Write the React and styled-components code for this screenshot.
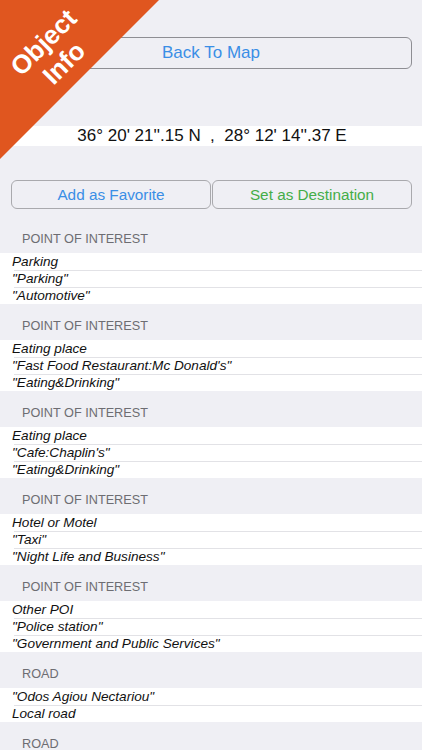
import React from "react";
import styled, { createGlobalStyle } from "styled-components";

const Global = createGlobalStyle`
  html, body { margin: 0; padding: 0; background: #efeff4; }
  body { font-family: "Liberation Sans", Arial, sans-serif; overflow: hidden; }
  * { box-sizing: border-box; }
`;

const Page = styled.div`
  position: relative;
  width: 422px;
  height: 750px;
  overflow: hidden;
  background: #efeff4;
  display: flex;
  flex-direction: column;
`;

const StatusBar = styled.div`
  height: 37px;
  flex: none;
`;

const TopBar = styled.div`
  display: flex;
  padding: 0 10px 0 10px;
`;

const OutlineButton = styled.button`
  flex: 1;
  height: ${(p) => p.$h}px;
  background: transparent;
  border: 1px solid ${(p) => p.$border || "#a9a9ad"};
  border-radius: 6px;
  color: ${(p) => p.$color};
  font-family: "Liberation Sans", Arial, sans-serif;
  font-size: ${(p) => p.$size}px;
  padding: 0;
  display: flex;
  align-items: center;
  justify-content: center;
  cursor: pointer;
`;

const CoordBar = styled.div`
  margin-top: 57px;
  height: 25px;
  background: #ffffff;
  display: flex;
  align-items: center;
  justify-content: center;
  font-size: 17px;
  color: #111;
  white-space: pre;
  padding-left: 2px;
`;

const ActionRow = styled.div`
  margin-top: 34px;
  display: flex;
  padding: 0 10px 0 11px;
  gap: 1px;
`;

const Sections = styled.div`
  margin-top: 8px;
  display: flex;
  flex-direction: column;
`;

const SectionHeader = styled.div`
  height: 36px;
  padding: 15px 0 0 22px;
  font-size: 12.7px;
  color: #6d6d72;
  text-transform: uppercase;
  line-height: 15px;
`;

const Group = styled.div`
  background: #ffffff;
  display: flex;
  flex-direction: column;
`;

const Row = styled.div`
  position: relative;
  height: 17px;
  line-height: 17px;
  padding-left: 12px;
  font-size: 13.6px;
  font-style: italic;
  color: #111;
  white-space: nowrap;
  & + & {
    &::before {
      content: "";
      position: absolute;
      left: 14px;
      right: 0;
      top: 0;
      height: 1px;
      background: #e2e2e6;
    }
  }
`;

const Corner = styled.div`
  position: absolute;
  left: 0;
  top: 0;
  width: 159px;
  height: 159px;
  background: #e0561f;
  clip-path: polygon(0 0, 100% 0, 0 100%);
  pointer-events: none;
`;

const CornerText = styled.div`
  position: absolute;
  left: 54px;
  top: 53px;
  transform: translate(-50%, -50%) rotate(-45deg);
  color: #ffffff;
  font-family: "Liberation Sans", Arial, sans-serif;
  font-weight: bold;
  font-size: 26px;
  line-height: 29px;
  text-align: center;
  white-space: nowrap;
`;

const sections = [
  { title: "Point of Interest", rows: ["Parking", '"Parking"', '"Automotive"'] },
  {
    title: "Point of Interest",
    rows: ["Eating place", '"Fast Food Restaurant:Mc Donald\'s"', '"Eating&Drinking"'],
  },
  { title: "Point of Interest", rows: ["Eating place", '"Cafe:Chaplin\'s"', '"Eating&Drinking"'] },
  {
    title: "Point of Interest",
    rows: ["Hotel or Motel", '"Taxi"', '"Night Life and Business"'],
  },
  {
    title: "Point of Interest",
    rows: ["Other POI", '"Police station"', '"Government and Public Services"'],
  },
  { title: "Road", rows: ['"Odos Agiou Nectariou"', "Local road"] },
  { title: "Road", rows: ['"Odos Agiou Nectariou"', "Local road"] },
];

export default function App() {
  return (
    <>
      <Global />
      <Page>
        <StatusBar />
        <TopBar>
          <OutlineButton $h={32} $size={17} $color="#3a8ee6" $border="#8e8e93">
            Back To Map
          </OutlineButton>
        </TopBar>
        <CoordBar>{"36° 20' 21''.15 N  ,  28° 12' 14''.37 E"}</CoordBar>
        <ActionRow>
          <OutlineButton $h={29} $size={15.3} $color="#3a8ee6">
            Add as Favorite
          </OutlineButton>
          <OutlineButton $h={29} $size={15.3} $color="#44ad48">
            Set as Destination
          </OutlineButton>
        </ActionRow>
        <Sections>
          {sections.map((s, i) => (
            <React.Fragment key={i}>
              <SectionHeader>{s.title}</SectionHeader>
              <Group>
                {s.rows.map((r, j) => (
                  <Row key={j}>{r}</Row>
                ))}
              </Group>
            </React.Fragment>
          ))}
        </Sections>
        <Corner>
          <CornerText>
            Object
            <br />
            Info
          </CornerText>
        </Corner>
      </Page>
    </>
  );
}
